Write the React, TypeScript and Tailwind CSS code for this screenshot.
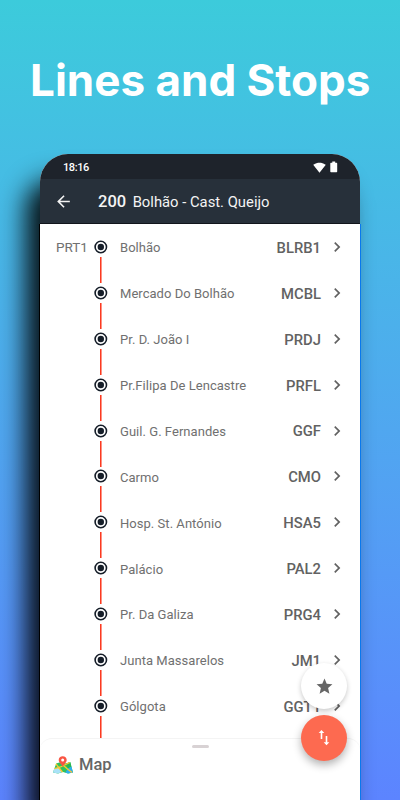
import { MdArrowBack, MdChevronRight, MdSignalWifi4Bar, MdStar } from "react-icons/md";

const stops = [
  { name: "Bolhão", code: "BLRB1", zone: "PRT1" },
  { name: "Mercado Do Bolhão", code: "MCBL" },
  { name: "Pr. D. João I", code: "PRDJ" },
  { name: "Pr.Filipa De Lencastre", code: "PRFL" },
  { name: "Guil. G. Fernandes", code: "GGF" },
  { name: "Carmo", code: "CMO" },
  { name: "Hosp. St. António", code: "HSA5" },
  { name: "Palácio", code: "PAL2" },
  { name: "Pr. Da Galiza", code: "PRG4" },
  { name: "Junta Massarelos", code: "JM1" },
  { name: "Gólgota", code: "GGT1" },
];

function StopMarker() {
  return (
    <svg width="14" height="46" viewBox="0 0 14 46" className="shrink-0 overflow-visible">
      <circle cx="6.8" cy="23" r="5.7" fill="#fff" stroke="#151d28" strokeWidth="1.6" />
      <circle cx="6.8" cy="23" r="3.2" fill="#151d28" />
      <path d="M6.8 33v26" stroke="#fb2508" strokeWidth="1.4" />
    </svg>
  );
}

function MapIcon() {
  return (
    <svg width="20" height="18" viewBox="0 0 20 18">
      <path d="M3.2 7.5 8 6l5 1.5L17.2 6 20 16.5l-5 .9-5-1.5-5 1.5-5-.9z" fill="#2fc25b" />
      <path d="M1.2 12.5 6.5 11l2.5 5-4 1.4-5-.9z" fill="#a9e2f8" />
      <path d="m13 7.5 4.2-1.5 1.2 4.6-3.4 1.8z" fill="#27b653" />
      <path d="m15 12.5 3.4-2L20 16.5l-5 .9-2.6-1z" fill="#2daef0" />
      <path d="m3 7.8 3 4.2 3.5 4M1.5 12.6l6-1.6 9.3-4.5M10.5 9.5l4 3.5 4.5 3.5" fill="none" stroke="#ffc52e" strokeWidth="1.3" />
      <path d="M9.7.2c-2.3 0-4 1.7-4 3.8 0 2.7 2.9 4.2 4 6.8 1.1-2.6 4-4.1 4-6.8C13.7 1.9 12 .2 9.7.2z" fill="#f95543" />
      <circle cx="9.7" cy="3.9" r="1.5" fill="#fff" />
    </svg>
  );
}

export default function App() {
  return (
    <main className="relative flex flex-col w-[400px] h-[800px] overflow-hidden bg-linear-to-b from-[#3ccbdb] to-[#5c84ff] font-['Roboto',sans-serif]">
      <h1 className="h-[154px] shrink-0 pt-[52px] pl-[30px] font-['Inter',sans-serif] font-bold text-[44px] leading-[56px] text-white whitespace-nowrap">
        Lines and Stops
      </h1>

      <div className="relative flex-1 min-h-0 mx-10 rounded-t-[28px] shadow-[-14px_26px_26px_0px_rgba(0,0,0,0.92)]">
        {/* Thin side edges of the phone */}
        <div className="absolute top-[70px] bottom-0 -left-px -right-px border-l border-r border-l-black border-r-[#0878ee]" />
        <div className="relative flex flex-col h-full overflow-hidden rounded-t-[28px] bg-white">
          {/* Status bar */}
          <div className="flex items-center justify-between h-[25px] shrink-0 pl-[23px] pr-[22px] pt-[2px] bg-[#1e232b] text-white">
            <span className="pt-px text-[11px] font-medium tracking-[-0.4px]">18:16</span>
            <div className="flex items-center gap-[4px] pb-px">
              <MdSignalWifi4Bar size={13} />
              <svg width="8" height="12" viewBox="0 0 8 12" fill="currentColor">
                <path d="M2.3.5h2.9v1.3h1.3q.7 0 .7.7v8q0 .7-.7.7H1q-.7 0-.7-.7V2.5q0-.7.7-.7h1.300z" />
              </svg>
            </div>
          </div>

          {/* App bar */}
          <header className="flex items-center h-[45px] shrink-0 pl-[14px] pt-px bg-[#27303a] border-b border-[#11151b] text-[#f4f4f4]">
            <MdArrowBack size={19} />
            <span className="ml-[25px] pt-[2px] text-[16.5px] font-medium">200</span>
            <span className="ml-[6.5px] pt-[2px] text-[14.8px]">Bolhão - Cast. Queijo</span>
          </header>

          {/* Stops */}
          <ul className="flex-1 min-h-0 overflow-hidden">
            {stops.map((stop) => (
              <li key={stop.code} className="flex items-center h-[45.92px] text-[#626262]">
                <span className="w-[53.5px] shrink-0 pl-4 pt-px text-[13.5px] text-[#707070]">{stop.zone}</span>
                <StopMarker />
                <span className="ml-[12.5px] flex-1 pt-[2px] text-[13px] text-[#707070] tracking-[0.04px] whitespace-nowrap">{stop.name}</span>
                <span className="pt-[2px] text-[14.8px] font-medium">{stop.code}</span>
                <MdChevronRight size={20} className="ml-[6px] mr-[13px]" />
              </li>
            ))}
          </ul>

          {/* Bottom sheet */}
          <section className="relative flex flex-col h-[62px] shrink-0 rounded-t-[12px] border-t border-[#f4f4f4] bg-white">
            <div className="mx-auto mt-[6px] h-[3px] w-[17px] rounded-full bg-[#d8d2d4]" />
            <div className="flex items-center pl-[13px] mt-[6px] gap-[6px]">
              <MapIcon />
              <span className="text-[16.5px] leading-[22px] font-medium text-[#666]">Map</span>
            </div>
          </section>

          {/* Floating buttons */}
          <div className="absolute right-[13px] bottom-[39px] flex flex-col gap-[6px]">
            <button className="flex items-center justify-center size-[46px] rounded-full bg-white text-[#666] shadow-[0_2px_5px_rgba(0,0,0,0.22)]">
              <MdStar size={19} />
            </button>
            <button className="flex items-center justify-center size-[46px] rounded-full bg-[#fd6a50] text-white shadow-[0_4px_8px_rgba(0,0,0,0.3)]">
              <svg width="12" height="16" viewBox="0 0 12 16" fill="currentColor">
                <path d="M3.5 0 6.3 3H4.3v6H2.7V3H.7zM7.7 6h1.600v6.200h2L8.500 15.300l-2.800-3.100h2z" />
              </svg>
            </button>
          </div>
        </div>
      </div>
    </main>
  );
}
